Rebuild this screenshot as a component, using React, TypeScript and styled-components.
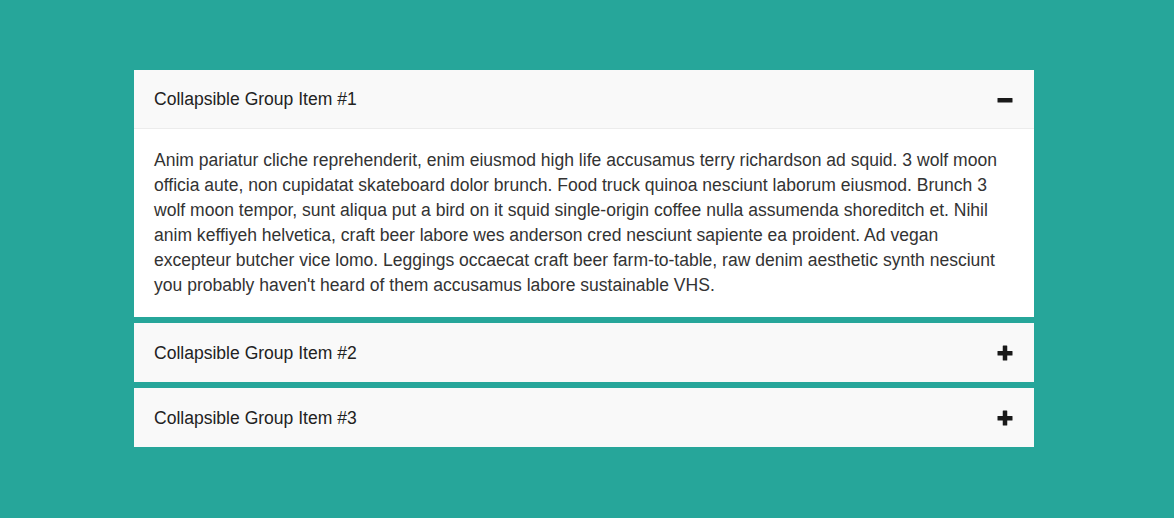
import React, { useState } from "react";
import styled, { createGlobalStyle } from "styled-components";

const GlobalStyle = createGlobalStyle`
  html, body { margin: 0; padding: 0; }
  body {
    background: #26a69a;
    font-family: "Liberation Sans", Arial, sans-serif;
  }
`;

const Page = styled.div`
  min-height: 518px;
  padding: 70px 0 0 134px;
  box-sizing: border-box;
  display: flex;
`;

const Accordion = styled.div`
  width: 900px;
  display: flex;
  flex-direction: column;
  gap: 6px;
`;

const Panel = styled.div`
  background: #fff;
`;

const Header = styled.button<{ $open: boolean }>`
  all: unset;
  box-sizing: border-box;
  width: 100%;
  height: 59px;
  padding: 1px 20px 0;
  display: flex;
  align-items: center;
  justify-content: space-between;
  background: #f9f9f9;
  border-bottom: ${(p) => (p.$open ? "1px solid #ececec" : "none")};
  color: #222;
  font-family: "Liberation Sans", Arial, sans-serif;
  font-size: 17.55px;
  cursor: pointer;
`;

const Body = styled.div`
  padding: 19px 20px 19px;
  color: #333;
  font-size: 17.55px;
  line-height: 25px;
`;

const Icon = styled.svg`
  width: 16px;
  height: 16px;
  display: block;
  margin-right: 1px;
`;

const PlusMinus = ({ open }: { open: boolean }) => (
  <Icon viewBox="0 0 16 16">
    <rect x="0.5" y="6" width="15" height="4.5" rx="0.6" fill="#1a1a1a" />
    {!open && <rect x="5.75" y="0.5" width="4.5" height="15" rx="0.6" fill="#1a1a1a" />}
  </Icon>
);

const TEXT =
  "Anim pariatur cliche reprehenderit, enim eiusmod high life accusamus terry richardson ad squid. 3 wolf moon officia aute, non cupidatat skateboard dolor brunch. Food truck quinoa nesciunt laborum eiusmod. Brunch 3 wolf moon tempor, sunt aliqua put a bird on it squid single-origin coffee nulla assumenda shoreditch et. Nihil anim keffiyeh helvetica, craft beer labore wes anderson cred nesciunt sapiente ea proident. Ad vegan excepteur butcher vice lomo. Leggings occaecat craft beer farm-to-table, raw denim aesthetic synth nesciunt you probably haven't heard of them accusamus labore sustainable VHS.";

const items = [1, 2, 3];

export default function App() {
  const [open, setOpen] = useState<number | null>(1);
  return (
    <>
      <GlobalStyle />
      <Page>
        <Accordion>
          {items.map((n) => {
            const isOpen = open === n;
            return (
              <Panel key={n}>
                <Header $open={isOpen} onClick={() => setOpen(isOpen ? null : n)}>
                  <span>Collapsible Group Item #{n}</span>
                  <PlusMinus open={isOpen} />
                </Header>
                {isOpen && <Body>{TEXT}</Body>}
              </Panel>
            );
          })}
        </Accordion>
      </Page>
    </>
  );
}
